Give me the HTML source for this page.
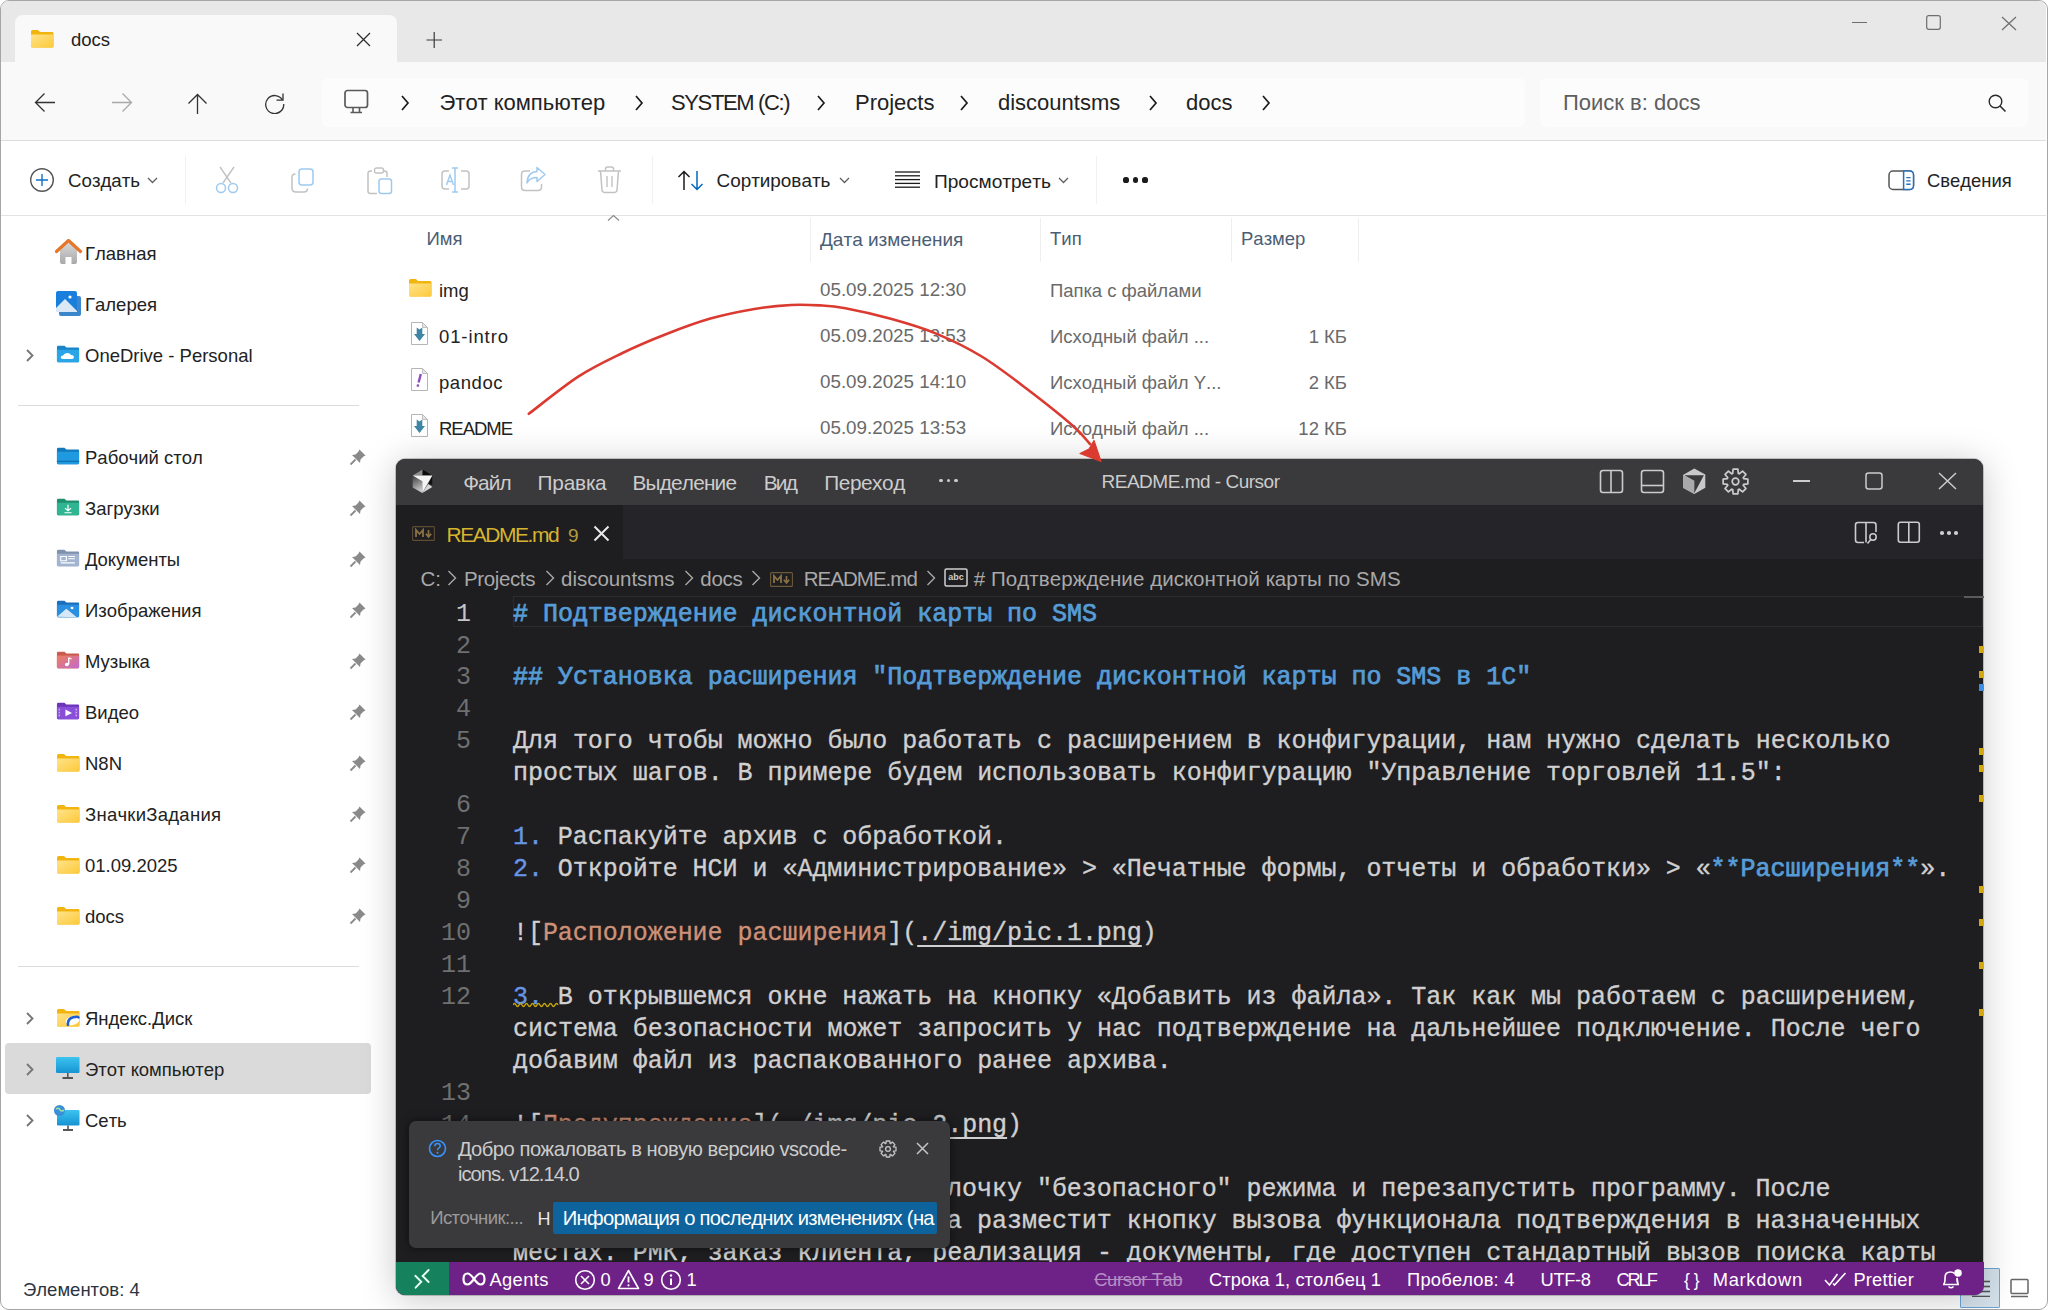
<!DOCTYPE html>
<html><head><meta charset="utf-8"><title>docs</title>
<style>
html,body{margin:0;padding:0;}
body{width:2048px;height:1310px;overflow:hidden;position:relative;background:#ffffff;font-family:'Liberation Sans',sans-serif;}
.t{position:absolute;white-space:pre;line-height:1;font-kerning:none;}
.r{position:absolute;}
</style></head><body>

<div class="r" style="left:0;top:0;width:2046px;height:1308px;border:1px solid #a6a6a6;border-radius:9px;overflow:hidden;background:#ffffff">
</div>
<div class="r" style="left:1px;top:1px;width:2045px;height:61px;background:#e8e8e8;border-radius:8px 8px 0 0"></div>
<div class="r" style="left:397px;top:61.5px;width:1649px;height:1.2px;background:#d9d9d9;"></div>
<div class="r" style="left:15px;top:15px;width:382px;height:48px;background:#f9f9f9;border-radius:8px 8px 0 0"></div>
<svg class="r" style="left:30px;top:29px;" width="25" height="20" viewBox="0 0 25 20"><defs><linearGradient id="fg30_29" x1="0" y1="0" x2="1" y2="1"><stop offset="0" stop-color="#ffe38a"/><stop offset="1" stop-color="#fcc93a"/></linearGradient></defs><path d="M1 2.5 Q1 1 2.5 1 H8 L10 3 H22.5 Q23.5 3 23.5 4.5 V17 Q23.5 18.5 22 18.5 H2.5 Q1 18.5 1 17 Z" fill="#f2b50f"/><path d="M1 5.5 H23.5 V17 Q23.5 18.5 22 18.5 H2.5 Q1 18.5 1 17 Z" fill="url(#fg30_29)"/></svg>
<div class="t" style="left:71px;top:30.9px;font-family:'Liberation Sans', sans-serif;font-size:18.5px;color:#222222;font-weight:400;">docs</div>
<svg class="r" style="left:356px;top:31.5px;" width="15" height="15" viewBox="0 0 15 15"><path d="M1 1 L14 14 M14 1 L1 14" stroke="#2a2a2a" stroke-width="1.2" fill="none"/></svg>
<svg class="r" style="left:426px;top:32px;" width="17" height="16" viewBox="0 0 17 16"><path d="M8.2 0 V16 M0.5 8 H16" stroke="#3a3a3a" stroke-width="1.2" fill="none"/></svg>
<div class="r" style="left:1852px;top:21.6px;width:15px;height:1.2px;background:#6e6e6e;"></div>
<svg class="r" style="left:1926px;top:15px;" width="15" height="15" viewBox="0 0 15 15"><rect x="0.7" y="0.7" width="13.6" height="13.6" rx="2" stroke="#6e6e6e" stroke-width="1.2" fill="none"/></svg>
<svg class="r" style="left:2001px;top:16px;" width="16" height="15" viewBox="0 0 16 15"><path d="M1 1 L15 14 M15 1 L1 14" stroke="#6e6e6e" stroke-width="1.2" fill="none"/></svg>
<div class="r" style="left:1px;top:62px;width:2045px;height:78px;background:#f9f9f9;"></div>
<div class="r" style="left:1px;top:140px;width:2045px;height:1px;background:#dedede;"></div>
<svg class="r" style="left:34px;top:92px;" width="22" height="21" viewBox="0 0 22 21"><path d="M21 10.5 H2 M10.5 1.5 L1.5 10.5 L10.5 19.5" stroke="#333333" stroke-width="1.3" fill="none"/></svg>
<svg class="r" style="left:111px;top:92px;" width="22" height="21" viewBox="0 0 22 21"><path d="M1 10.5 H20 M11.5 1.5 L20.5 10.5 L11.5 19.5" stroke="#a8a8a8" stroke-width="1.3" fill="none"/></svg>
<svg class="r" style="left:187px;top:93px;" width="21" height="21" viewBox="0 0 21 21"><path d="M10.5 21 V1.5 M1.5 10.5 L10.5 1.5 L19.5 10.5" stroke="#333333" stroke-width="1.3" fill="none"/></svg>
<svg class="r" style="left:264px;top:92px;" width="22" height="22" viewBox="0 0 22 22"><path d="M18.5 8 A9 9 0 1 0 19.7 12" stroke="#333333" stroke-width="1.3" fill="none"/><path d="M19 1.5 V8.2 H12.5" stroke="#333333" stroke-width="1.3" fill="none"/></svg>
<div class="r" style="left:322px;top:78px;width:1203px;height:49px;background:#fcfcfc;border-radius:6px"></div>
<svg class="r" style="left:344px;top:89px;" width="26" height="26" viewBox="0 0 26 26"><rect x="1" y="1.5" width="22.5" height="17" rx="2.5" stroke="#5a5a5a" stroke-width="1.7" fill="none"/><path d="M9 19 V23 M15.5 19 V23 M6.5 23.5 H18" stroke="#5a5a5a" stroke-width="1.6" fill="none"/></svg>
<svg class="r" style="left:401px;top:95px;" width="9" height="16" viewBox="0 0 9 16"><path d="M1 1 L7 8.0 L1 15" stroke="#1b1b1b" stroke-width="1.7" fill="none"/></svg>
<svg class="r" style="left:635px;top:95px;" width="9" height="16" viewBox="0 0 9 16"><path d="M1 1 L7 8.0 L1 15" stroke="#1b1b1b" stroke-width="1.7" fill="none"/></svg>
<svg class="r" style="left:817px;top:95px;" width="9" height="16" viewBox="0 0 9 16"><path d="M1 1 L7 8.0 L1 15" stroke="#1b1b1b" stroke-width="1.7" fill="none"/></svg>
<svg class="r" style="left:960px;top:95px;" width="9" height="16" viewBox="0 0 9 16"><path d="M1 1 L7 8.0 L1 15" stroke="#1b1b1b" stroke-width="1.7" fill="none"/></svg>
<svg class="r" style="left:1149px;top:95px;" width="9" height="16" viewBox="0 0 9 16"><path d="M1 1 L7 8.0 L1 15" stroke="#1b1b1b" stroke-width="1.7" fill="none"/></svg>
<svg class="r" style="left:1262px;top:95px;" width="9" height="16" viewBox="0 0 9 16"><path d="M1 1 L7 8.0 L1 15" stroke="#1b1b1b" stroke-width="1.7" fill="none"/></svg>
<div class="t" style="left:439.5px;top:91.6px;font-family:'Liberation Sans', sans-serif;font-size:22px;color:#222222;font-weight:400;">Этот компьютер</div>
<div class="t" style="left:671px;top:91.6px;font-family:'Liberation Sans', sans-serif;font-size:22px;color:#222222;font-weight:400;letter-spacing:-1.372px;">SYSTEM (C:)</div>
<div class="t" style="left:855px;top:91.6px;font-family:'Liberation Sans', sans-serif;font-size:22px;color:#222222;font-weight:400;">Projects</div>
<div class="t" style="left:998px;top:91.6px;font-family:'Liberation Sans', sans-serif;font-size:22px;color:#222222;font-weight:400;">discountsms</div>
<div class="t" style="left:1186px;top:91.6px;font-family:'Liberation Sans', sans-serif;font-size:22px;color:#222222;font-weight:400;">docs</div>
<div class="r" style="left:1540px;top:78px;width:488px;height:49px;background:#fcfcfc;border-radius:6px"></div>
<div class="t" style="left:1563px;top:91.6px;font-family:'Liberation Sans', sans-serif;font-size:22px;color:#5e5e5e;font-weight:400;">Поиск в: docs</div>
<svg class="r" style="left:1988px;top:94px;" width="19" height="19" viewBox="0 0 19 19"><circle cx="7.5" cy="7.5" r="6.3" stroke="#2a2a2a" stroke-width="1.4" fill="none"/><path d="M12 12 L17.5 17.5" stroke="#2a2a2a" stroke-width="1.6"/></svg>
<div class="r" style="left:1px;top:141px;width:2045px;height:74px;background:#ffffff;"></div>
<div class="r" style="left:1px;top:215px;width:2045px;height:1.2px;background:#e3e3e3;"></div>
<svg class="r" style="left:29px;top:167px;" width="26" height="26" viewBox="0 0 26 26"><circle cx="13" cy="13" r="11.3" stroke="#555555" stroke-width="1.4" fill="none"/><path d="M13 7 V19 M7 13 H19" stroke="#1170c8" stroke-width="1.4"/></svg>
<div class="t" style="left:68px;top:172.1px;font-family:'Liberation Sans', sans-serif;font-size:18.7px;color:#222222;font-weight:400;">Создать</div>
<svg class="r" style="left:147px;top:177px;" width="11" height="7" viewBox="0 0 11 7"><path d="M1 1 L5.5 5.5 L10 1" stroke="#5e5e5e" stroke-width="1.3" fill="none"/></svg>
<div class="r" style="left:185px;top:156px;width:1px;height:48px;background:#f1f1f1;"></div>
<svg class="r" style="left:214px;top:166px;" width="26" height="28" viewBox="0 0 26 28"><path d="M6 1 L17 17 M20 1 L9 17" stroke="#c2c2c2" stroke-width="1.4" fill="none"/><circle cx="7" cy="22" r="4.5" stroke="#9fcaef" stroke-width="1.5" fill="none"/><circle cx="19" cy="22" r="4.5" stroke="#9fcaef" stroke-width="1.5" fill="none"/></svg>
<svg class="r" style="left:291px;top:168px;" width="25" height="25" viewBox="0 0 25 25"><rect x="8" y="1" width="14" height="16" rx="3" stroke="#9fcaef" stroke-width="1.5" fill="none"/><path d="M4.5 6 Q1 6 1 9.5 V20 Q1 24 5 24 H13 Q16.5 24 16.5 20.5" stroke="#c2c2c2" stroke-width="1.5" fill="none"/></svg>
<svg class="r" style="left:367px;top:167px;" width="26" height="28" viewBox="0 0 26 28"><path d="M5 4 H3.5 Q1 4 1 6.5 V24 Q1 26.5 3.5 26.5 H10" stroke="#c2c2c2" stroke-width="1.5" fill="none"/><rect x="7.5" y="1" width="9" height="5" rx="2" stroke="#c2c2c2" stroke-width="1.4" fill="none"/><path d="M16 4 H17.5 Q20 4 20 6.5 V10" stroke="#c2c2c2" stroke-width="1.5" fill="none"/><rect x="12" y="12" width="12.5" height="14.5" rx="2.5" stroke="#9fcaef" stroke-width="1.5" fill="none"/></svg>
<svg class="r" style="left:441px;top:167px;" width="30" height="27" viewBox="0 0 30 27"><path d="M8 4 H4 Q1 4 1 7 V19 Q1 22 4 22 H8 M20 4 H25 Q28 4 28 7 V19 Q28 22 25 22 H20" stroke="#c2c2c2" stroke-width="1.5" fill="none"/><path d="M14 1 V25 M11 1 H17 M11 25 H17" stroke="#9fcaef" stroke-width="1.5" fill="none"/><path d="M5.5 18 L9 8 L12.5 18 M6.7 14.5 H11.3" stroke="#9fcaef" stroke-width="1.4" fill="none"/></svg>
<svg class="r" style="left:520px;top:166px;" width="27" height="26" viewBox="0 0 27 26"><path d="M10 5 H5 Q1.5 5 1.5 8.5 V21 Q1.5 24.5 5 24.5 H18 Q21.5 24.5 21.5 21 V18" stroke="#c2c2c2" stroke-width="1.5" fill="none"/><path d="M17 1.5 L25 8.5 L17 15.5 V11.5 Q10 11.5 7 17 Q7.5 6 17 5.5 Z" stroke="#9fcaef" stroke-width="1.5" fill="none" stroke-linejoin="round"/></svg>
<svg class="r" style="left:597px;top:166px;" width="25" height="28" viewBox="0 0 25 28"><path d="M1 5 H24 M8.5 5 V3 Q8.5 1 10.5 1 H14.5 Q16.5 1 16.5 3 V5" stroke="#c2c2c2" stroke-width="1.5" fill="none"/><path d="M3.5 5 L5 24 Q5.3 26.5 8 26.5 H17 Q19.7 26.5 20 24 L21.5 5" stroke="#c2c2c2" stroke-width="1.5" fill="none"/><path d="M10 10 V21 M15 10 V21" stroke="#c2c2c2" stroke-width="1.4"/></svg>
<div class="r" style="left:652px;top:156px;width:1px;height:48px;background:#f1f1f1;"></div>
<svg class="r" style="left:677px;top:170px;" width="28" height="21" viewBox="0 0 28 21"><path d="M7 20 V1.5 M1.5 7 L7 1.5 L12.5 7" stroke="#1b1b1b" stroke-width="1.5" fill="none"/><path d="M20 1 V19.5 M14.5 14 L20 19.5 L25.5 14" stroke="#0067c0" stroke-width="1.5" fill="none"/></svg>
<div class="t" style="left:716.5px;top:171.9px;font-family:'Liberation Sans', sans-serif;font-size:18.9px;color:#222222;font-weight:400;">Сортировать</div>
<svg class="r" style="left:839px;top:177px;" width="11" height="7" viewBox="0 0 11 7"><path d="M1 1 L5.5 5.5 L10 1" stroke="#5e5e5e" stroke-width="1.3" fill="none"/></svg>
<svg class="r" style="left:894px;top:171px;" width="27" height="18" viewBox="0 0 27 18"><path d="M1 1.0 H26" stroke="#1b1b1b" stroke-width="1.3"/><path d="M1 4.8 H26" stroke="#1b1b1b" stroke-width="1.3"/><path d="M1 8.6 H26" stroke="#1b1b1b" stroke-width="1.3"/><path d="M1 12.4 H26" stroke="#1b1b1b" stroke-width="1.3"/><path d="M1 16.2 H26" stroke="#1b1b1b" stroke-width="1.3"/></svg>
<div class="t" style="left:934px;top:171.8px;font-family:'Liberation Sans', sans-serif;font-size:19.1px;color:#222222;font-weight:400;">Просмотреть</div>
<svg class="r" style="left:1058px;top:177px;" width="11" height="7" viewBox="0 0 11 7"><path d="M1 1 L5.5 5.5 L10 1" stroke="#5e5e5e" stroke-width="1.3" fill="none"/></svg>
<div class="r" style="left:1096px;top:156px;width:1px;height:48px;background:#f1f1f1;"></div>
<div class="r" style="left:1123.4px;top:177.4px;width:5.2px;height:5.2px;border-radius:50%;background:#1b1b1b"></div>
<div class="r" style="left:1132.9px;top:177.4px;width:5.2px;height:5.2px;border-radius:50%;background:#1b1b1b"></div>
<div class="r" style="left:1142.4px;top:177.4px;width:5.2px;height:5.2px;border-radius:50%;background:#1b1b1b"></div>
<svg class="r" style="left:1888px;top:170px;" width="27" height="21" viewBox="0 0 27 21"><rect x="1" y="1" width="24.5" height="18.5" rx="4" stroke="#555555" stroke-width="1.5" fill="none"/><path d="M15.6 1 H21.5 Q25.5 1 25.5 5 V15.5 Q25.5 19.5 21.5 19.5 H15.6 Z" fill="#ffffff" stroke="#2a6fb8" stroke-width="1.5"/><path d="M18.3 7.6 H22.6 M18.3 10.9 H22.6 M18.3 14.2 H22.6" stroke="#2a6fb8" stroke-width="1.4"/></svg>
<div class="t" style="left:1927px;top:172.4px;font-family:'Liberation Sans', sans-serif;font-size:18.4px;color:#222222;font-weight:400;">Сведения</div>
<div class="t" style="left:85px;top:244.6px;font-family:'Liberation Sans', sans-serif;font-size:18.5px;color:#222222;font-weight:400;">Главная</div>
<svg class="r" style="left:55px;top:239px;" width="28" height="26" viewBox="0 0 28 26"><defs><linearGradient id="hg" x1="0" y1="0" x2="0" y2="1"><stop offset="0" stop-color="#d8d8d8"/><stop offset="1" stop-color="#a9a9a9"/></linearGradient></defs><path d="M5 11 L13.5 3 L22 11 V23 Q22 25 20 25 H16.5 V18 H10.5 V25 H7 Q5 25 5 23 Z" fill="url(#hg)"/><path d="M1.5 12.5 L13.5 1.5 L25.5 12.5" stroke="#e5762a" stroke-width="3.2" fill="none" stroke-linejoin="round" stroke-linecap="round"/></svg>
<div class="t" style="left:85px;top:295.6px;font-family:'Liberation Sans', sans-serif;font-size:18.5px;color:#222222;font-weight:400;">Галерея</div>
<svg class="r" style="left:55px;top:290px;" width="28" height="27" viewBox="0 0 28 27"><rect x="4" y="6" width="22" height="20" rx="2" fill="#3c86cc"/><rect x="1" y="1" width="21" height="21" rx="2" fill="#1a7fdc"/><path d="M1 18 L10 9 L22 21 V22 H1 Z" fill="#dbe9f6"/><circle cx="15" cy="7" r="1.6" fill="#ffffff"/></svg>
<div class="t" style="left:85px;top:346.6px;font-family:'Liberation Sans', sans-serif;font-size:18.5px;color:#222222;font-weight:400;">OneDrive - Personal</div>
<svg class="r" style="left:56px;top:344.5px" width="24.5" height="18.5" viewBox="0 0 26 22" preserveAspectRatio="none"><path d="M1 2.5 Q1 1 2.5 1 H9 L11 3 H23.5 Q24.5 3 24.5 4 V19 Q24.5 20.5 23 20.5 H2.5 Q1 20.5 1 19 Z" fill="#1b84c8"/><path d="M1 5.5 H24.5 V19 Q24.5 20.5 23 20.5 H2.5 Q1 20.5 1 19 Z" fill="#2aa5e8"/><path d="M7 16.5 Q5 16.5 5 14.5 Q5 12.5 7.5 12.5 Q8.5 9.5 12 9.5 Q15 9.5 16 12 Q19 12 19 14.5 Q19 16.5 17 16.5 Z" fill="#ffffff"/></svg>
<svg class="r" style="left:26px;top:348.5px;" width="8.5" height="13" viewBox="0 0 8.5 13"><path d="M1 1 L6.5 6.5 L1 12" stroke="#777777" stroke-width="1.9" fill="none"/></svg>
<div class="r" style="left:18px;top:405px;width:341px;height:1.2px;background:#dcdcdc;"></div>
<div class="t" style="left:85px;top:448.6px;font-family:'Liberation Sans', sans-serif;font-size:18.5px;color:#222222;font-weight:400;">Рабочий стол</div>
<svg class="r" style="left:56px;top:446.5px" width="24.5" height="18.5" viewBox="0 0 26 22" preserveAspectRatio="none"><path d="M1 2.5 Q1 1 2.5 1 H9 L11 3 H23.5 Q24.5 3 24.5 4 V19 Q24.5 20.5 23 20.5 H2.5 Q1 20.5 1 19 Z" fill="#1379bd"/><path d="M1 5.5 H24.5 V19 Q24.5 20.5 23 20.5 H2.5 Q1 20.5 1 19 Z" fill="#1f9ae0"/><path d="M1 17 H24.5" stroke="#0f5f9a" stroke-width="1"/></svg>
<svg class="r" style="left:349px;top:448px;" width="18" height="18" viewBox="0 0 18 18"><path d="M10.5 1.5 L16.5 7.5 L14.5 8.5 L11.5 11.5 L11 15 L3 7 L6.5 6.5 L9.5 3.5 Z" fill="#8a8a8a"/><path d="M6.5 11.5 L1.5 16.5" stroke="#8a8a8a" stroke-width="1.8"/></svg>
<div class="t" style="left:85px;top:499.6px;font-family:'Liberation Sans', sans-serif;font-size:18.5px;color:#222222;font-weight:400;">Загрузки</div>
<svg class="r" style="left:56px;top:497.5px" width="24.5" height="18.5" viewBox="0 0 26 22" preserveAspectRatio="none"><path d="M1 2.5 Q1 1 2.5 1 H9 L11 3 H23.5 Q24.5 3 24.5 4 V19 Q24.5 20.5 23 20.5 H2.5 Q1 20.5 1 19 Z" fill="#1e8f6e"/><path d="M1 5.5 H24.5 V19 Q24.5 20.5 23 20.5 H2.5 Q1 20.5 1 19 Z" fill="#2fb591"/><path d="M12.7 8 V15 M9.5 12 L12.7 15.2 L16 12 M9 17.5 H16.5" stroke="#ffffff" stroke-width="1.3" fill="none"/></svg>
<svg class="r" style="left:349px;top:499px;" width="18" height="18" viewBox="0 0 18 18"><path d="M10.5 1.5 L16.5 7.5 L14.5 8.5 L11.5 11.5 L11 15 L3 7 L6.5 6.5 L9.5 3.5 Z" fill="#8a8a8a"/><path d="M6.5 11.5 L1.5 16.5" stroke="#8a8a8a" stroke-width="1.8"/></svg>
<div class="t" style="left:85px;top:550.6px;font-family:'Liberation Sans', sans-serif;font-size:18.5px;color:#222222;font-weight:400;">Документы</div>
<svg class="r" style="left:56px;top:548.5px" width="24.5" height="18.5" viewBox="0 0 26 22" preserveAspectRatio="none"><path d="M1 2.5 Q1 1 2.5 1 H9 L11 3 H23.5 Q24.5 3 24.5 4 V19 Q24.5 20.5 23 20.5 H2.5 Q1 20.5 1 19 Z" fill="#7f91ad"/><path d="M1 5.5 H24.5 V19 Q24.5 20.5 23 20.5 H2.5 Q1 20.5 1 19 Z" fill="#a2b4cf"/><path d="M5 9 H11 V14 H5 Z M13 9 H20 M13 11.5 H20 M5 16.5 H20" stroke="#ffffff" stroke-width="1.2" fill="none"/></svg>
<svg class="r" style="left:349px;top:550px;" width="18" height="18" viewBox="0 0 18 18"><path d="M10.5 1.5 L16.5 7.5 L14.5 8.5 L11.5 11.5 L11 15 L3 7 L6.5 6.5 L9.5 3.5 Z" fill="#8a8a8a"/><path d="M6.5 11.5 L1.5 16.5" stroke="#8a8a8a" stroke-width="1.8"/></svg>
<div class="t" style="left:85px;top:601.6px;font-family:'Liberation Sans', sans-serif;font-size:18.5px;color:#222222;font-weight:400;">Изображения</div>
<svg class="r" style="left:56px;top:599.5px" width="24.5" height="18.5" viewBox="0 0 26 22" preserveAspectRatio="none"><path d="M1 2.5 Q1 1 2.5 1 H9 L11 3 H23.5 Q24.5 3 24.5 4 V19 Q24.5 20.5 23 20.5 H2.5 Q1 20.5 1 19 Z" fill="#1a6fbd"/><path d="M1 5.5 H24.5 V19 Q24.5 20.5 23 20.5 H2.5 Q1 20.5 1 19 Z" fill="#2a8fe0"/><path d="M3 19 L11 11 L20 20" fill="#d6e7f7"/><path d="M1 20 L11 10.5 L22 20.5 Z" fill="#d6e7f7"/><circle cx="17" cy="9.5" r="1.6" fill="#fff"/></svg>
<svg class="r" style="left:349px;top:601px;" width="18" height="18" viewBox="0 0 18 18"><path d="M10.5 1.5 L16.5 7.5 L14.5 8.5 L11.5 11.5 L11 15 L3 7 L6.5 6.5 L9.5 3.5 Z" fill="#8a8a8a"/><path d="M6.5 11.5 L1.5 16.5" stroke="#8a8a8a" stroke-width="1.8"/></svg>
<div class="t" style="left:85px;top:652.6px;font-family:'Liberation Sans', sans-serif;font-size:18.5px;color:#222222;font-weight:400;">Музыка</div>
<svg class="r" style="left:56px;top:650.5px" width="24.5" height="18.5" viewBox="0 0 26 22" preserveAspectRatio="none"><path d="M1 2.5 Q1 1 2.5 1 H9 L11 3 H23.5 Q24.5 3 24.5 4 V19 Q24.5 20.5 23 20.5 H2.5 Q1 20.5 1 19 Z" fill="#c85b4d"/><path d="M1 5.5 H24.5 V19 Q24.5 20.5 23 20.5 H2.5 Q1 20.5 1 19 Z" fill="#e77b6b"/><defs><linearGradient id="mg" x1="0" y1="0" x2="1" y2="1"><stop offset="0" stop-color="#ef7d5d"/><stop offset="1" stop-color="#c06ad0"/></linearGradient></defs><path d="M1 5.5 H24.5 V19 Q24.5 20.5 23 20.5 H2.5 Q1 20.5 1 19 Z" fill="url(#mg)"/><path d="M13.5 8 V16" stroke="#fff" stroke-width="1.4"/><circle cx="11.5" cy="16" r="2" fill="#fff"/><path d="M13.5 8 L16.5 9.5" stroke="#fff" stroke-width="1.4"/></svg>
<svg class="r" style="left:349px;top:652px;" width="18" height="18" viewBox="0 0 18 18"><path d="M10.5 1.5 L16.5 7.5 L14.5 8.5 L11.5 11.5 L11 15 L3 7 L6.5 6.5 L9.5 3.5 Z" fill="#8a8a8a"/><path d="M6.5 11.5 L1.5 16.5" stroke="#8a8a8a" stroke-width="1.8"/></svg>
<div class="t" style="left:85px;top:703.6px;font-family:'Liberation Sans', sans-serif;font-size:18.5px;color:#222222;font-weight:400;">Видео</div>
<svg class="r" style="left:56px;top:701.5px" width="24.5" height="18.5" viewBox="0 0 26 22" preserveAspectRatio="none"><path d="M1 2.5 Q1 1 2.5 1 H9 L11 3 H23.5 Q24.5 3 24.5 4 V19 Q24.5 20.5 23 20.5 H2.5 Q1 20.5 1 19 Z" fill="#6d35b8"/><path d="M1 5.5 H24.5 V19 Q24.5 20.5 23 20.5 H2.5 Q1 20.5 1 19 Z" fill="#8a4fd8"/><path d="M10 9 L17 13 L10 17 Z" fill="#fff"/><path d="M3.5 8 V18 M21.5 8 V18" stroke="#c9a9f2" stroke-width="1.6" stroke-dasharray="2 1.5"/></svg>
<svg class="r" style="left:349px;top:703px;" width="18" height="18" viewBox="0 0 18 18"><path d="M10.5 1.5 L16.5 7.5 L14.5 8.5 L11.5 11.5 L11 15 L3 7 L6.5 6.5 L9.5 3.5 Z" fill="#8a8a8a"/><path d="M6.5 11.5 L1.5 16.5" stroke="#8a8a8a" stroke-width="1.8"/></svg>
<div class="t" style="left:85px;top:754.6px;font-family:'Liberation Sans', sans-serif;font-size:18.5px;color:#222222;font-weight:400;">N8N</div>
<svg class="r" style="left:56px;top:753px;" width="25" height="20" viewBox="0 0 25 20"><defs><linearGradient id="fg56_753" x1="0" y1="0" x2="1" y2="1"><stop offset="0" stop-color="#ffe38a"/><stop offset="1" stop-color="#fcc93a"/></linearGradient></defs><path d="M1 2.5 Q1 1 2.5 1 H8 L10 3 H22.5 Q23.5 3 23.5 4.5 V17 Q23.5 18.5 22 18.5 H2.5 Q1 18.5 1 17 Z" fill="#f2b50f"/><path d="M1 5.5 H23.5 V17 Q23.5 18.5 22 18.5 H2.5 Q1 18.5 1 17 Z" fill="url(#fg56_753)"/></svg>
<svg class="r" style="left:349px;top:754px;" width="18" height="18" viewBox="0 0 18 18"><path d="M10.5 1.5 L16.5 7.5 L14.5 8.5 L11.5 11.5 L11 15 L3 7 L6.5 6.5 L9.5 3.5 Z" fill="#8a8a8a"/><path d="M6.5 11.5 L1.5 16.5" stroke="#8a8a8a" stroke-width="1.8"/></svg>
<div class="t" style="left:85px;top:805.6px;font-family:'Liberation Sans', sans-serif;font-size:18.5px;color:#222222;font-weight:400;letter-spacing:0.262px;">ЗначкиЗадания</div>
<svg class="r" style="left:56px;top:804px;" width="25" height="20" viewBox="0 0 25 20"><defs><linearGradient id="fg56_804" x1="0" y1="0" x2="1" y2="1"><stop offset="0" stop-color="#ffe38a"/><stop offset="1" stop-color="#fcc93a"/></linearGradient></defs><path d="M1 2.5 Q1 1 2.5 1 H8 L10 3 H22.5 Q23.5 3 23.5 4.5 V17 Q23.5 18.5 22 18.5 H2.5 Q1 18.5 1 17 Z" fill="#f2b50f"/><path d="M1 5.5 H23.5 V17 Q23.5 18.5 22 18.5 H2.5 Q1 18.5 1 17 Z" fill="url(#fg56_804)"/></svg>
<svg class="r" style="left:349px;top:805px;" width="18" height="18" viewBox="0 0 18 18"><path d="M10.5 1.5 L16.5 7.5 L14.5 8.5 L11.5 11.5 L11 15 L3 7 L6.5 6.5 L9.5 3.5 Z" fill="#8a8a8a"/><path d="M6.5 11.5 L1.5 16.5" stroke="#8a8a8a" stroke-width="1.8"/></svg>
<div class="t" style="left:85px;top:856.6px;font-family:'Liberation Sans', sans-serif;font-size:18.5px;color:#222222;font-weight:400;">01.09.2025</div>
<svg class="r" style="left:56px;top:855px;" width="25" height="20" viewBox="0 0 25 20"><defs><linearGradient id="fg56_855" x1="0" y1="0" x2="1" y2="1"><stop offset="0" stop-color="#ffe38a"/><stop offset="1" stop-color="#fcc93a"/></linearGradient></defs><path d="M1 2.5 Q1 1 2.5 1 H8 L10 3 H22.5 Q23.5 3 23.5 4.5 V17 Q23.5 18.5 22 18.5 H2.5 Q1 18.5 1 17 Z" fill="#f2b50f"/><path d="M1 5.5 H23.5 V17 Q23.5 18.5 22 18.5 H2.5 Q1 18.5 1 17 Z" fill="url(#fg56_855)"/></svg>
<svg class="r" style="left:349px;top:856px;" width="18" height="18" viewBox="0 0 18 18"><path d="M10.5 1.5 L16.5 7.5 L14.5 8.5 L11.5 11.5 L11 15 L3 7 L6.5 6.5 L9.5 3.5 Z" fill="#8a8a8a"/><path d="M6.5 11.5 L1.5 16.5" stroke="#8a8a8a" stroke-width="1.8"/></svg>
<div class="t" style="left:85px;top:907.6px;font-family:'Liberation Sans', sans-serif;font-size:18.5px;color:#222222;font-weight:400;">docs</div>
<svg class="r" style="left:56px;top:906px;" width="25" height="20" viewBox="0 0 25 20"><defs><linearGradient id="fg56_906" x1="0" y1="0" x2="1" y2="1"><stop offset="0" stop-color="#ffe38a"/><stop offset="1" stop-color="#fcc93a"/></linearGradient></defs><path d="M1 2.5 Q1 1 2.5 1 H8 L10 3 H22.5 Q23.5 3 23.5 4.5 V17 Q23.5 18.5 22 18.5 H2.5 Q1 18.5 1 17 Z" fill="#f2b50f"/><path d="M1 5.5 H23.5 V17 Q23.5 18.5 22 18.5 H2.5 Q1 18.5 1 17 Z" fill="url(#fg56_906)"/></svg>
<svg class="r" style="left:349px;top:907px;" width="18" height="18" viewBox="0 0 18 18"><path d="M10.5 1.5 L16.5 7.5 L14.5 8.5 L11.5 11.5 L11 15 L3 7 L6.5 6.5 L9.5 3.5 Z" fill="#8a8a8a"/><path d="M6.5 11.5 L1.5 16.5" stroke="#8a8a8a" stroke-width="1.8"/></svg>
<div class="r" style="left:18px;top:966px;width:341px;height:1.2px;background:#dcdcdc;"></div>
<div class="t" style="left:85px;top:1009.6px;font-family:'Liberation Sans', sans-serif;font-size:18.5px;color:#222222;font-weight:400;">Яндекс.Диск</div>
<svg class="r" style="left:56px;top:1008px;" width="25" height="20" viewBox="0 0 25 20"><defs><linearGradient id="fg56_1008" x1="0" y1="0" x2="1" y2="1"><stop offset="0" stop-color="#ffe38a"/><stop offset="1" stop-color="#fcc93a"/></linearGradient></defs><path d="M1 2.5 Q1 1 2.5 1 H8 L10 3 H22.5 Q23.5 3 23.5 4.5 V17 Q23.5 18.5 22 18.5 H2.5 Q1 18.5 1 17 Z" fill="#f2b50f"/><path d="M1 5.5 H23.5 V17 Q23.5 18.5 22 18.5 H2.5 Q1 18.5 1 17 Z" fill="url(#fg56_1008)"/></svg>
<svg class="r" style="left:64px;top:1015px;transform:rotate(-15deg)" width="17" height="11" viewBox="0 0 17 11"><ellipse cx="8.5" cy="5.5" rx="7" ry="4.5" fill="#ffffff"/><path d="M3 8.5 Q4 2.5 10 2.5 Q14.5 2.5 15 4" stroke="#1f5fd0" stroke-width="2.6" fill="none" stroke-linecap="round"/></svg>
<svg class="r" style="left:26px;top:1011.5px;" width="8.5" height="13" viewBox="0 0 8.5 13"><path d="M1 1 L6.5 6.5 L1 12" stroke="#777777" stroke-width="1.9" fill="none"/></svg>
<div class="r" style="left:5px;top:1043px;width:366px;height:51px;background:#dadada;border-radius:4px"></div>
<div class="t" style="left:85px;top:1060.6px;font-family:'Liberation Sans', sans-serif;font-size:18.5px;color:#222222;font-weight:400;">Этот компьютер</div>
<svg class="r" style="left:55px;top:1056px;" width="26" height="25" viewBox="0 0 26 25"><defs><linearGradient id="pcg" x1="0" y1="0" x2="0" y2="1"><stop offset="0" stop-color="#3cc4f0"/><stop offset="1" stop-color="#1693d2"/></linearGradient></defs><rect x="1" y="1" width="23.5" height="16" rx="1.2" fill="url(#pcg)"/><path d="M12.8 17 V21" stroke="#555" stroke-width="1.6"/><path d="M7.5 22 H18" stroke="#444" stroke-width="1.8"/></svg>
<svg class="r" style="left:26px;top:1062.5px;" width="8.5" height="13" viewBox="0 0 8.5 13"><path d="M1 1 L6.5 6.5 L1 12" stroke="#777777" stroke-width="1.9" fill="none"/></svg>
<div class="t" style="left:85px;top:1111.6px;font-family:'Liberation Sans', sans-serif;font-size:18.5px;color:#222222;font-weight:400;">Сеть</div>
<svg class="r" style="left:53px;top:1104px;" width="29" height="28" viewBox="0 0 29 28"><defs><linearGradient id="ng" x1="0" y1="0" x2="0" y2="1"><stop offset="0" stop-color="#3cc4f0"/><stop offset="1" stop-color="#1693d2"/></linearGradient></defs><rect x="4" y="6" width="22.5" height="15.5" rx="1.2" fill="url(#ng)"/><path d="M15 21.5 V25" stroke="#555" stroke-width="1.6"/><path d="M10 26 H20" stroke="#444" stroke-width="1.8"/><circle cx="6.5" cy="6.5" r="5.5" fill="#3a8fd9"/><path d="M3 5 Q6 3 7 6 Q9 8 11 6" stroke="#9fe0a0" stroke-width="1.6" fill="none"/></svg>
<svg class="r" style="left:26px;top:1113.5px;" width="8.5" height="13" viewBox="0 0 8.5 13"><path d="M1 1 L6.5 6.5 L1 12" stroke="#777777" stroke-width="1.9" fill="none"/></svg>
<div class="t" style="left:23px;top:1280.8px;font-family:'Liberation Sans', sans-serif;font-size:18.5px;color:#2b3442;font-weight:400;">Элементов: 4</div>
<div class="t" style="left:426.5px;top:230.3px;font-family:'Liberation Sans', sans-serif;font-size:18.5px;color:#4a5e76;font-weight:400;">Имя</div>
<div class="t" style="left:820px;top:229.8px;font-family:'Liberation Sans', sans-serif;font-size:19px;color:#4a5e76;font-weight:400;">Дата изменения</div>
<div class="t" style="left:1050px;top:230.3px;font-family:'Liberation Sans', sans-serif;font-size:18.5px;color:#4a5e76;font-weight:400;">Тип</div>
<div class="t" style="left:1241px;top:230.3px;font-family:'Liberation Sans', sans-serif;font-size:18.5px;color:#4a5e76;font-weight:400;">Размер</div>
<div class="r" style="left:810px;top:218px;width:1px;height:44px;background:#efefef;"></div>
<div class="r" style="left:1040px;top:218px;width:1px;height:44px;background:#efefef;"></div>
<div class="r" style="left:1231px;top:218px;width:1px;height:44px;background:#efefef;"></div>
<div class="r" style="left:1358px;top:218px;width:1px;height:44px;background:#efefef;"></div>
<svg class="r" style="left:607px;top:214px;" width="13" height="8" viewBox="0 0 13 8"><path d="M1 6.5 L6.5 1.5 L12 6.5" stroke="#8a8a8a" stroke-width="1.2" fill="none"/></svg>
<div class="t" style="left:439px;top:281.6px;font-family:'Liberation Sans', sans-serif;font-size:18.5px;color:#222222;font-weight:400;">img</div>
<div class="t" style="left:820px;top:281.3px;font-family:'Liberation Sans', sans-serif;font-size:18.8px;color:#6a6a6a;font-weight:400;">05.09.2025 12:30</div>
<div class="t" style="left:1050px;top:281.6px;font-family:'Liberation Sans', sans-serif;font-size:18.5px;color:#6a6a6a;font-weight:400;">Папка с файлами</div>
<svg class="r" style="left:408px;top:278px;" width="25" height="20" viewBox="0 0 25 20"><defs><linearGradient id="fg408_278" x1="0" y1="0" x2="1" y2="1"><stop offset="0" stop-color="#ffe38a"/><stop offset="1" stop-color="#fcc93a"/></linearGradient></defs><path d="M1 2.5 Q1 1 2.5 1 H8 L10 3 H22.5 Q23.5 3 23.5 4.5 V17 Q23.5 18.5 22 18.5 H2.5 Q1 18.5 1 17 Z" fill="#f2b50f"/><path d="M1 5.5 H23.5 V17 Q23.5 18.5 22 18.5 H2.5 Q1 18.5 1 17 Z" fill="url(#fg408_278)"/></svg>
<div class="t" style="left:439px;top:327.6px;font-family:'Liberation Sans', sans-serif;font-size:18.5px;color:#222222;font-weight:400;letter-spacing:0.896px;">01-intro</div>
<div class="t" style="left:820px;top:327.3px;font-family:'Liberation Sans', sans-serif;font-size:18.8px;color:#6a6a6a;font-weight:400;">05.09.2025 13:53</div>
<div class="t" style="left:1050px;top:327.6px;font-family:'Liberation Sans', sans-serif;font-size:18.5px;color:#6a6a6a;font-weight:400;">Исходный файл ...</div>
<div class="t" style="right:701px;top:327.6px;font-family:'Liberation Sans', sans-serif;font-size:18.5px;color:#6a6a6a">1 КБ</div>
<svg class="r" style="left:410px;top:321px;" width="19" height="25" viewBox="0 0 19 25"><path d="M1.5 1.5 H12.5 L17.5 6.5 V23.5 H1.5 Z" fill="#ffffff" stroke="#b5b5b5" stroke-width="1"/><path d="M12.5 1.5 V6.5 H17.5 Z" fill="#e4e4e4" stroke="#b5b5b5" stroke-width="0.8"/><path d="M6.7 6.5 L9.5 8.5 L12.3 6.5 V13 H15 L9.5 20 L4 13 H6.7 Z" fill="#3f86a6"/></svg>
<div class="t" style="left:439px;top:373.6px;font-family:'Liberation Sans', sans-serif;font-size:18.5px;color:#222222;font-weight:400;letter-spacing:0.561px;">pandoc</div>
<div class="t" style="left:820px;top:373.3px;font-family:'Liberation Sans', sans-serif;font-size:18.8px;color:#6a6a6a;font-weight:400;">05.09.2025 14:10</div>
<div class="t" style="left:1050px;top:373.6px;font-family:'Liberation Sans', sans-serif;font-size:18.5px;color:#6a6a6a;font-weight:400;">Исходный файл Y...</div>
<div class="t" style="right:701px;top:373.6px;font-family:'Liberation Sans', sans-serif;font-size:18.5px;color:#6a6a6a">2 КБ</div>
<svg class="r" style="left:410px;top:367px;" width="19" height="25" viewBox="0 0 19 25"><path d="M1.5 1.5 H12.5 L17.5 6.5 V23.5 H1.5 Z" fill="#ffffff" stroke="#b5b5b5" stroke-width="1"/><path d="M12.5 1.5 V6.5 H17.5 Z" fill="#e4e4e4" stroke="#b5b5b5" stroke-width="0.8"/><path d="M10.8 7 L8.6 15.5" stroke="#8a4ec0" stroke-width="2.4"/><circle cx="7.9" cy="18.6" r="1.3" fill="#8a4ec0"/></svg>
<div class="t" style="left:439px;top:419.6px;font-family:'Liberation Sans', sans-serif;font-size:18.5px;color:#222222;font-weight:400;letter-spacing:-1.030px;">README</div>
<div class="t" style="left:820px;top:419.3px;font-family:'Liberation Sans', sans-serif;font-size:18.8px;color:#6a6a6a;font-weight:400;">05.09.2025 13:53</div>
<div class="t" style="left:1050px;top:419.6px;font-family:'Liberation Sans', sans-serif;font-size:18.5px;color:#6a6a6a;font-weight:400;">Исходный файл ...</div>
<div class="t" style="right:701px;top:419.6px;font-family:'Liberation Sans', sans-serif;font-size:18.5px;color:#6a6a6a">12 КБ</div>
<svg class="r" style="left:410px;top:413px;" width="19" height="25" viewBox="0 0 19 25"><path d="M1.5 1.5 H12.5 L17.5 6.5 V23.5 H1.5 Z" fill="#ffffff" stroke="#b5b5b5" stroke-width="1"/><path d="M12.5 1.5 V6.5 H17.5 Z" fill="#e4e4e4" stroke="#b5b5b5" stroke-width="0.8"/><path d="M6.7 6.5 L9.5 8.5 L12.3 6.5 V13 H15 L9.5 20 L4 13 H6.7 Z" fill="#3f86a6"/></svg>
<div class="r" style="left:1960px;top:1268px;width:40px;height:40px;background:#d5e2ec;border:1px solid #6aa6d8;box-sizing:border-box;border-radius:1px"></div>
<svg class="r" style="left:1971px;top:1280px;" width="20" height="17" viewBox="0 0 20 17"><path d="M8 1.5 H19" stroke="#555" stroke-width="1.6"/><path d="M8 6.5 H19" stroke="#555" stroke-width="1.6"/><path d="M8 11.5 H19" stroke="#555" stroke-width="1.6"/><path d="M1 16.5 H19" stroke="#555" stroke-width="1.6"/></svg>
<svg class="r" style="left:2010px;top:1278px;" width="20" height="20" viewBox="0 0 20 20"><rect x="1" y="1.5" width="17" height="14" rx="1" stroke="#666" stroke-width="1.5" fill="none"/><path d="M1 18.5 H18" stroke="#666" stroke-width="1.5"/></svg>
<div class="r" style="left:396px;top:458.6px;width:1587.3px;height:836.1999999999999px;border-radius:9px;background:#1e1d20;box-shadow:0 4px 36px rgba(0,0,0,0.22),0 0 0 1px rgba(0,0,0,0.2);overflow:hidden">
<div class="r" style="left:0px;top:0px;width:1587.3px;height:46.7px;background:#3a393c;"></div>
<div class="r" style="left:0px;top:46.7px;width:1587.3px;height:54px;background:#252428;"></div>
<div class="r" style="left:0px;top:46.7px;width:227px;height:54px;background:#1e1d20;"></div>
</div>
<svg class="r" style="left:408px;top:466px;" width="30" height="30" viewBox="0 0 30 30"><defs><linearGradient id="clf" x1="0" y1="0" x2="0.3" y2="1"><stop offset="0" stop-color="#3a3a3a"/><stop offset="1" stop-color="#c8c8c8"/></linearGradient></defs><path d="M14.7 3.6 L24.3 9.5 V21.1 L14.3 27 L4.7 21.5 V9.5 Z" fill="#4a4a4a"/><path d="M4.7 9.5 L14.3 15.3 V27 L4.7 21.5 Z" fill="url(#clf)"/><path d="M14.7 3.6 L4.7 9.5 L14.5 9.5 Z" fill="#8c8c8c"/><path d="M14.7 3.6 L24.3 9.5 L14.5 9.5 Z" fill="#0c0c0c"/><path d="M24.3 9.5 V19 L20.2 18 Z" fill="#111111"/><path d="M20.2 18 L24.3 21.1 L14.3 27 Z" fill="#d8d8d8"/><path d="M4.7 9.5 L24.3 9.5 L14.3 27 V15.3 Z" fill="#f4f4f4"/></svg>
<div class="t" style="left:463.2px;top:472.6px;font-family:'Liberation Sans', sans-serif;font-size:20.8px;color:#cccccc;font-weight:400;letter-spacing:-0.879px;">Файл</div>
<div class="t" style="left:537.5px;top:472.6px;font-family:'Liberation Sans', sans-serif;font-size:20.8px;color:#cccccc;font-weight:400;letter-spacing:-0.161px;">Правка</div>
<div class="t" style="left:632.5px;top:472.6px;font-family:'Liberation Sans', sans-serif;font-size:20.8px;color:#cccccc;font-weight:400;letter-spacing:-0.801px;">Выделение</div>
<div class="t" style="left:763.8px;top:472.6px;font-family:'Liberation Sans', sans-serif;font-size:20.8px;color:#cccccc;font-weight:400;letter-spacing:-1.814px;">Вид</div>
<div class="t" style="left:824.3px;top:472.6px;font-family:'Liberation Sans', sans-serif;font-size:20.8px;color:#cccccc;font-weight:400;letter-spacing:-0.460px;">Переход</div>
<div class="r" style="left:939.4px;top:479.3px;width:3.2px;height:3.2px;border-radius:50%;background:#cccccc"></div>
<div class="r" style="left:946.9px;top:479.3px;width:3.2px;height:3.2px;border-radius:50%;background:#cccccc"></div>
<div class="r" style="left:954.4px;top:479.3px;width:3.2px;height:3.2px;border-radius:50%;background:#cccccc"></div>
<div class="t" style="left:1101.5px;top:472.2px;font-family:'Liberation Sans', sans-serif;font-size:19px;color:#cccccc;font-weight:400;letter-spacing:-0.491px;">README.md - Cursor</div>
<svg class="r" style="left:1599px;top:469px;" width="25" height="25" viewBox="0 0 25 25"><rect x="1.5" y="1.5" width="22" height="22" rx="2.5" stroke="#cccccc" stroke-width="1.6" fill="none"/><path d="M12 1.5 V23.5" stroke="#cccccc" stroke-width="1.6"/></svg>
<svg class="r" style="left:1640px;top:469px;" width="25" height="25" viewBox="0 0 25 25"><rect x="1.5" y="1.5" width="22" height="22" rx="2.5" stroke="#cccccc" stroke-width="1.6" fill="none"/><path d="M1.5 16.5 H23.5" stroke="#cccccc" stroke-width="1.6"/></svg>
<svg class="r" style="left:1681px;top:466px;" width="26" height="30" viewBox="0 0 26 30"><path d="M13.3 2.4 L24.3 8.5 V21.8 L13.3 28 L2 21.8 V8.9 Z" fill="#c9c9cb"/><path d="M2 8.9 L13.3 15 V28 L2 21.8 Z" fill="#a9a9ab"/><path d="M3.4 9.3 L22.9 9.3 L13.3 27.3 V14.75 Z" fill="#3a393c"/></svg>
<svg class="r" style="left:1722px;top:468px;" width="27" height="27" viewBox="0 0 27 27"><polygon points="11.12,1.13 15.88,1.13 16.29,5.36 17.28,5.78 20.57,3.07 23.93,6.43 21.22,9.72 21.64,10.71 25.87,11.12 25.87,15.88 21.64,16.29 21.22,17.28 23.93,20.57 20.57,23.93 17.28,21.22 16.29,21.64 15.88,25.87 11.12,25.87 10.71,21.64 9.72,21.22 6.43,23.93 3.07,20.57 5.78,17.28 5.36,16.29 1.13,15.88 1.13,11.12 5.36,10.71 5.78,9.72 3.07,6.43 6.43,3.07 9.72,5.78 10.71,5.36" stroke="#cccccc" stroke-width="1.7" fill="none" stroke-linejoin="round"/><circle cx="13.5" cy="13.5" r="3.3" stroke="#cccccc" stroke-width="1.7" fill="none"/></svg>
<div class="r" style="left:1793px;top:480px;width:17px;height:1.5px;background:#cccccc;"></div>
<svg class="r" style="left:1865px;top:472px;" width="18" height="18" viewBox="0 0 18 18"><rect x="1" y="1" width="16" height="16" rx="2.5" stroke="#cccccc" stroke-width="1.5" fill="none"/></svg>
<svg class="r" style="left:1938px;top:472px;" width="19" height="18" viewBox="0 0 19 18"><path d="M1 1 L18 17 M18 1 L1 17" stroke="#cccccc" stroke-width="1.5" fill="none"/></svg>
<svg class="r" style="left:412px;top:526px;" width="23" height="15" viewBox="0 0 23 15"><rect x="0.6" y="0.6" width="21.8" height="13.8" rx="1" stroke="#5e4d33" stroke-width="1.1" fill="none"/><path d="M4 11 V4 L7.5 8 L11 4 V11" stroke="#8a7246" stroke-width="1.8" fill="none"/><path d="M16.5 4 V10 M13.8 7.8 L16.5 11 L19.2 7.8" stroke="#8a7246" stroke-width="1.7" fill="none"/></svg>
<div class="t" style="left:446.6px;top:523.9px;font-family:'Liberation Sans', sans-serif;font-size:21px;color:#d6b52e;font-weight:400;letter-spacing:-1.481px;">README.md</div>
<div class="t" style="left:568px;top:525.6px;font-family:'Liberation Sans', sans-serif;font-size:19px;color:#b39c40;font-weight:400;">9</div>
<svg class="r" style="left:593px;top:525px;" width="17" height="17" viewBox="0 0 17 17"><path d="M1.5 1.5 L15.5 15.5 M15.5 1.5 L1.5 15.5" stroke="#e8e8e8" stroke-width="2" fill="none"/></svg>
<svg class="r" style="left:1854px;top:521px;" width="26" height="25" viewBox="0 0 26 25"><path d="M12 1.5 H4 Q1.5 1.5 1.5 4 V19 Q1.5 21.5 4 21.5 H10 M12 1.5 V21.5 M12 1.5 H19.5 Q22 1.5 22 4 V11" stroke="#cccccc" stroke-width="1.6" fill="none"/><circle cx="19" cy="16" r="3.2" stroke="#cccccc" stroke-width="1.5" fill="none"/><path d="M16.8 18.5 L13.5 22.5" stroke="#cccccc" stroke-width="1.6"/></svg>
<svg class="r" style="left:1897px;top:521px;" width="24" height="23" viewBox="0 0 24 23"><rect x="1.3" y="1.3" width="21" height="20" rx="2.2" stroke="#cccccc" stroke-width="1.6" fill="none"/><path d="M11.8 1.3 V21.3" stroke="#cccccc" stroke-width="1.6"/></svg>
<div class="r" style="left:1940.2px;top:531.2px;width:3.6px;height:3.6px;border-radius:50%;background:#cccccc"></div>
<div class="r" style="left:1947.2px;top:531.2px;width:3.6px;height:3.6px;border-radius:50%;background:#cccccc"></div>
<div class="r" style="left:1954.2px;top:531.2px;width:3.6px;height:3.6px;border-radius:50%;background:#cccccc"></div>
<div class="t" style="left:420.5px;top:569.4px;font-family:'Liberation Sans', sans-serif;font-size:20.5px;color:#a9a9a9;font-weight:400;">C:</div>
<svg class="r" style="left:446.5px;top:570px;" width="10" height="17" viewBox="0 0 10 17"><path d="M1.5 1 L8.5 8 L1.5 15" stroke="#a9a9a9" stroke-width="1.4" fill="none"/></svg>
<div class="t" style="left:463.9px;top:569.4px;font-family:'Liberation Sans', sans-serif;font-size:20.5px;color:#a9a9a9;font-weight:400;letter-spacing:-0.365px;">Projects</div>
<svg class="r" style="left:544.5px;top:570px;" width="10" height="17" viewBox="0 0 10 17"><path d="M1.5 1 L8.5 8 L1.5 15" stroke="#a9a9a9" stroke-width="1.4" fill="none"/></svg>
<div class="t" style="left:561.1px;top:569.4px;font-family:'Liberation Sans', sans-serif;font-size:20.5px;color:#a9a9a9;font-weight:400;letter-spacing:-0.043px;">discountsms</div>
<svg class="r" style="left:683.5px;top:570px;" width="10" height="17" viewBox="0 0 10 17"><path d="M1.5 1 L8.5 8 L1.5 15" stroke="#a9a9a9" stroke-width="1.4" fill="none"/></svg>
<div class="t" style="left:700.3px;top:569.4px;font-family:'Liberation Sans', sans-serif;font-size:20.5px;color:#a9a9a9;font-weight:400;letter-spacing:-0.267px;">docs</div>
<svg class="r" style="left:751px;top:570px;" width="10" height="17" viewBox="0 0 10 17"><path d="M1.5 1 L8.5 8 L1.5 15" stroke="#a9a9a9" stroke-width="1.4" fill="none"/></svg>
<svg class="r" style="left:770px;top:572px;" width="23" height="15" viewBox="0 0 23 15"><rect x="0.6" y="0.6" width="21.8" height="13.8" rx="1" stroke="#6e5a3a" stroke-width="1.1" fill="none"/><path d="M4 11 V4 L7.5 8 L11 4 V11" stroke="#8a7246" stroke-width="1.8" fill="none"/><path d="M16.5 4 V10 M13.8 7.8 L16.5 11 L19.2 7.8" stroke="#8a7246" stroke-width="1.7" fill="none"/></svg>
<div class="t" style="left:803.8px;top:569.4px;font-family:'Liberation Sans', sans-serif;font-size:20.5px;color:#a9a9a9;font-weight:400;letter-spacing:-0.985px;">README.md</div>
<svg class="r" style="left:926px;top:570px;" width="10" height="17" viewBox="0 0 10 17"><path d="M1.5 1 L8.5 8 L1.5 15" stroke="#a9a9a9" stroke-width="1.4" fill="none"/></svg>
<svg class="r" style="left:944px;top:568px;" width="24" height="19" viewBox="0 0 24 19"><rect x="1" y="1" width="22" height="17" rx="1.5" stroke="#d0d0d0" stroke-width="1.5" fill="none"/><text x="12" y="12" font-family="Liberation Sans" font-size="9" font-weight="700" fill="#d0d0d0" text-anchor="middle">abc</text></svg>
<div class="t" style="left:973.7px;top:569.4px;font-family:'Liberation Sans', sans-serif;font-size:20.5px;color:#a9a9a9;font-weight:400;letter-spacing:0.078px;"># Подтверждение дисконтной карты по SMS</div>
<div class="r" style="left:513px;top:596px;width:1470px;height:31px;background:transparent;border:1px solid #2c2c2e;box-sizing:border-box"></div>
<div class="t" style="left:456.03px;top:601.5px;font-family:'Liberation Mono', monospace;font-size:25px;color:#c6c6c6;font-weight:400;">1</div>
<div class="t" style="left:513.0px;top:601.5px;font-family:'Liberation Mono', monospace;font-size:25px;color:#569cd6;font-weight:400;letter-spacing:-0.030px;-webkit-text-stroke:0.75px #569cd6;"># Подтверждение дисконтной карты по SMS</div>
<div class="t" style="left:456.03px;top:633.5px;font-family:'Liberation Mono', monospace;font-size:25px;color:#6e7070;font-weight:400;">2</div>
<div class="t" style="left:456.03px;top:665.4px;font-family:'Liberation Mono', monospace;font-size:25px;color:#6e7070;font-weight:400;">3</div>
<div class="t" style="left:513.0px;top:665.4px;font-family:'Liberation Mono', monospace;font-size:25px;color:#569cd6;font-weight:400;letter-spacing:-0.030px;-webkit-text-stroke:0.75px #569cd6;">## Установка расширения &quot;Подтверждение дисконтной карты по SMS в 1С&quot;</div>
<div class="t" style="left:456.03px;top:697.4px;font-family:'Liberation Mono', monospace;font-size:25px;color:#6e7070;font-weight:400;">4</div>
<div class="t" style="left:456.03px;top:729.3px;font-family:'Liberation Mono', monospace;font-size:25px;color:#6e7070;font-weight:400;">5</div>
<div class="t" style="left:513.0px;top:729.3px;font-family:'Liberation Mono', monospace;font-size:25px;color:#d0d0d0;font-weight:400;letter-spacing:-0.030px;-webkit-text-stroke:0.35px #d0d0d0;">Для того чтобы можно было работать с расширением в конфигурации, нам нужно сделать несколько</div>
<div class="t" style="left:513.0px;top:761.2px;font-family:'Liberation Mono', monospace;font-size:25px;color:#d0d0d0;font-weight:400;letter-spacing:-0.030px;-webkit-text-stroke:0.35px #d0d0d0;">простых шагов. В примере будем использовать конфигурацию &quot;Управление торговлей 11.5&quot;:</div>
<div class="t" style="left:456.03px;top:793.2px;font-family:'Liberation Mono', monospace;font-size:25px;color:#6e7070;font-weight:400;">6</div>
<div class="t" style="left:456.03px;top:825.1px;font-family:'Liberation Mono', monospace;font-size:25px;color:#6e7070;font-weight:400;">7</div>
<div class="t" style="left:513.0px;top:825.1px;font-family:'Liberation Mono', monospace;font-size:25px;color:#6796e6;font-weight:400;letter-spacing:-0.030px;-webkit-text-stroke:0.35px #6796e6;">1.</div>
<div class="t" style="left:542.9px;top:825.1px;font-family:'Liberation Mono', monospace;font-size:25px;color:#d0d0d0;font-weight:400;letter-spacing:-0.030px;-webkit-text-stroke:0.35px #d0d0d0;"> Распакуйте архив с обработкой.</div>
<div class="t" style="left:456.03px;top:857.1px;font-family:'Liberation Mono', monospace;font-size:25px;color:#6e7070;font-weight:400;">8</div>
<div class="t" style="left:513.0px;top:857.1px;font-family:'Liberation Mono', monospace;font-size:25px;color:#6796e6;font-weight:400;letter-spacing:-0.030px;-webkit-text-stroke:0.35px #6796e6;">2.</div>
<div class="t" style="left:542.9px;top:857.1px;font-family:'Liberation Mono', monospace;font-size:25px;color:#d0d0d0;font-weight:400;letter-spacing:-0.030px;-webkit-text-stroke:0.35px #d0d0d0;"> Откройте НСИ и «Администрирование» &gt; «Печатные формы, отчеты и обработки» &gt; «</div>
<div class="t" style="left:1710.6px;top:857.1px;font-family:'Liberation Mono', monospace;font-size:25px;color:#569cd6;font-weight:400;letter-spacing:-0.030px;-webkit-text-stroke:0.75px #569cd6;">**Расширения**</div>
<div class="t" style="left:1920.2px;top:857.1px;font-family:'Liberation Mono', monospace;font-size:25px;color:#d0d0d0;font-weight:400;letter-spacing:-0.030px;-webkit-text-stroke:0.35px #d0d0d0;">».</div>
<div class="t" style="left:456.03px;top:889.0px;font-family:'Liberation Mono', monospace;font-size:25px;color:#6e7070;font-weight:400;">9</div>
<div class="t" style="left:441.06px;top:921.0px;font-family:'Liberation Mono', monospace;font-size:25px;color:#6e7070;font-weight:400;letter-spacing:-0.065px;">10</div>
<div class="t" style="left:513.0px;top:921.0px;font-family:'Liberation Mono', monospace;font-size:25px;color:#d0d0d0;font-weight:400;letter-spacing:-0.030px;-webkit-text-stroke:0.35px #d0d0d0;">![</div>
<div class="t" style="left:542.9px;top:921.0px;font-family:'Liberation Mono', monospace;font-size:25px;color:#ce9178;font-weight:400;letter-spacing:-0.030px;-webkit-text-stroke:0.35px #ce9178;">Расположение расширения</div>
<div class="t" style="left:887.2px;top:921.0px;font-family:'Liberation Mono', monospace;font-size:25px;color:#d0d0d0;font-weight:400;letter-spacing:-0.030px;-webkit-text-stroke:0.35px #d0d0d0;">](</div>
<div class="t" style="left:917.2px;top:921.0px;font-family:'Liberation Mono', monospace;font-size:25px;color:#d0d0d0;font-weight:400;letter-spacing:-0.030px;-webkit-text-stroke:0.35px #d0d0d0;text-decoration:underline;text-underline-offset:4.5px;text-decoration-thickness:1.6px;text-decoration-skip-ink:none">./img/pic.1.png</div>
<div class="t" style="left:1141.7px;top:921.0px;font-family:'Liberation Mono', monospace;font-size:25px;color:#d0d0d0;font-weight:400;letter-spacing:-0.030px;-webkit-text-stroke:0.35px #d0d0d0;">)</div>
<div class="t" style="left:441.06px;top:953.0px;font-family:'Liberation Mono', monospace;font-size:25px;color:#6e7070;font-weight:400;letter-spacing:-0.065px;">11</div>
<div class="t" style="left:441.06px;top:984.9px;font-family:'Liberation Mono', monospace;font-size:25px;color:#6e7070;font-weight:400;letter-spacing:-0.065px;">12</div>
<div class="t" style="left:513.0px;top:984.9px;font-family:'Liberation Mono', monospace;font-size:25px;color:#6796e6;font-weight:400;letter-spacing:-0.030px;-webkit-text-stroke:0.35px #6796e6;">3.</div>
<div class="t" style="left:542.9px;top:984.9px;font-family:'Liberation Mono', monospace;font-size:25px;color:#d0d0d0;font-weight:400;letter-spacing:-0.030px;-webkit-text-stroke:0.35px #d0d0d0;"> В открывшемся окне нажать на кнопку «Добавить из файла». Так как мы работаем с расширением,</div>
<svg class="r" style="left:513px;top:1002px;" width="46" height="7" viewBox="0 0 46 7"><path d="M0 3 Q1.5 0 3 3 Q4.5 6 6 3 Q7.5 0 9 3 Q10.5 6 12 3 Q13.5 0 15 3 Q16.5 6 18 3 Q19.5 0 21 3 Q22.5 6 24 3 Q25.5 0 27 3 Q28.5 6 30 3 Q31.5 0 33 3 Q34.5 6 36 3 Q37.5 0 39 3 Q40.5 6 42 3 Q43.5 0 45 3" stroke="#c9a800" stroke-width="1.4" fill="none"/></svg>
<div class="t" style="left:513.0px;top:1016.8px;font-family:'Liberation Mono', monospace;font-size:25px;color:#d0d0d0;font-weight:400;letter-spacing:-0.030px;-webkit-text-stroke:0.35px #d0d0d0;">система безопасности может запросить у нас подтверждение на дальнейшее подключение. После чего</div>
<div class="t" style="left:513.0px;top:1048.8px;font-family:'Liberation Mono', monospace;font-size:25px;color:#d0d0d0;font-weight:400;letter-spacing:-0.030px;-webkit-text-stroke:0.35px #d0d0d0;">добавим файл из распакованного ранее архива.</div>
<div class="t" style="left:441.06px;top:1080.8px;font-family:'Liberation Mono', monospace;font-size:25px;color:#6e7070;font-weight:400;letter-spacing:-0.065px;">13</div>
<div class="t" style="left:441.06px;top:1112.7px;font-family:'Liberation Mono', monospace;font-size:25px;color:#6e7070;font-weight:400;letter-spacing:-0.065px;">14</div>
<div class="t" style="left:513.0px;top:1112.7px;font-family:'Liberation Mono', monospace;font-size:25px;color:#d0d0d0;font-weight:400;letter-spacing:-0.030px;-webkit-text-stroke:0.35px #d0d0d0;">![</div>
<div class="t" style="left:542.9px;top:1112.7px;font-family:'Liberation Mono', monospace;font-size:25px;color:#ce9178;font-weight:400;letter-spacing:-0.030px;-webkit-text-stroke:0.35px #ce9178;">Предупреждение</div>
<div class="t" style="left:752.5px;top:1112.7px;font-family:'Liberation Mono', monospace;font-size:25px;color:#d0d0d0;font-weight:400;letter-spacing:-0.030px;-webkit-text-stroke:0.35px #d0d0d0;">](</div>
<div class="t" style="left:782.5px;top:1112.7px;font-family:'Liberation Mono', monospace;font-size:25px;color:#d0d0d0;font-weight:400;letter-spacing:-0.030px;-webkit-text-stroke:0.35px #d0d0d0;text-decoration:underline;text-underline-offset:4.5px;text-decoration-thickness:1.6px;text-decoration-skip-ink:none">./img/pic.2.png</div>
<div class="t" style="left:1007.0px;top:1112.7px;font-family:'Liberation Mono', monospace;font-size:25px;color:#d0d0d0;font-weight:400;letter-spacing:-0.030px;-webkit-text-stroke:0.35px #d0d0d0;">)</div>
<div class="t" style="left:441.06px;top:1144.7px;font-family:'Liberation Mono', monospace;font-size:25px;color:#6e7070;font-weight:400;letter-spacing:-0.065px;">15</div>
<div class="t" style="left:441.06px;top:1176.6px;font-family:'Liberation Mono', monospace;font-size:25px;color:#6e7070;font-weight:400;letter-spacing:-0.065px;">16</div>
<div class="t" style="left:513.0px;top:1176.6px;font-family:'Liberation Mono', monospace;font-size:25px;color:#6796e6;font-weight:400;letter-spacing:-0.030px;-webkit-text-stroke:0.35px #6796e6;">4.</div>
<div class="t" style="left:542.9px;top:1176.6px;font-family:'Liberation Mono', monospace;font-size:25px;color:#d0d0d0;font-weight:400;letter-spacing:-0.030px;-webkit-text-stroke:0.35px #d0d0d0;"> Отключите в окне диалог га</div>
<div class="t" style="left:947.1px;top:1176.6px;font-family:'Liberation Mono', monospace;font-size:25px;color:#d0d0d0;font-weight:400;letter-spacing:-0.030px;-webkit-text-stroke:0.35px #d0d0d0;">лочку &quot;безопасного&quot; режима и перезапустить программу. После</div>
<div class="t" style="left:513.0px;top:1208.5px;font-family:'Liberation Mono', monospace;font-size:25px;color:#d0d0d0;font-weight:400;letter-spacing:-0.030px;-webkit-text-stroke:0.35px #d0d0d0;">этого обработка автоматическ </div>
<div class="t" style="left:947.1px;top:1208.5px;font-family:'Liberation Mono', monospace;font-size:25px;color:#d0d0d0;font-weight:400;letter-spacing:-0.030px;-webkit-text-stroke:0.35px #d0d0d0;">а разместит кнопку вызова функционала подтверждения в назначенных</div>
<div class="t" style="left:513.0px;top:1240.5px;font-family:'Liberation Mono', monospace;font-size:25px;color:#d0d0d0;font-weight:400;letter-spacing:-0.030px;-webkit-text-stroke:0.35px #d0d0d0;">местах. РМК, заказ клиента, реализация - документы, где доступен стандартный вызов поиска карты</div>
<div class="r" style="left:1964px;top:596px;width:19.5px;height:2px;background:#5a5a5a;"></div>
<div class="r" style="left:1978.5px;top:645.5px;width:5px;height:7px;background:#d4a90f;"></div>
<div class="r" style="left:1978.5px;top:671.0px;width:5px;height:7px;background:#d4a90f;"></div>
<div class="r" style="left:1978.5px;top:748.0px;width:5px;height:7px;background:#d4a90f;"></div>
<div class="r" style="left:1978.5px;top:765.2px;width:5px;height:7px;background:#d4a90f;"></div>
<div class="r" style="left:1978.5px;top:795.3px;width:5px;height:7px;background:#d4a90f;"></div>
<div class="r" style="left:1978.5px;top:885.5px;width:5px;height:7px;background:#d4a90f;"></div>
<div class="r" style="left:1978.5px;top:919.1px;width:5px;height:7px;background:#d4a90f;"></div>
<div class="r" style="left:1978.5px;top:962.0px;width:5px;height:7px;background:#d4a90f;"></div>
<div class="r" style="left:1978.5px;top:1008.9px;width:5px;height:7px;background:#d4a90f;"></div>
<div class="r" style="left:1978.5px;top:683.9px;width:5px;height:7px;background:#3a8ee6;"></div>
<div class="r" style="left:409px;top:1121px;width:541px;height:127px;background:#3a393c;border-radius:7px;box-shadow:0 0 10px rgba(0,0,0,0.55);"></div>
<svg class="r" style="left:428px;top:1139px;" width="19" height="19" viewBox="0 0 19 19"><circle cx="9.5" cy="9.5" r="8" stroke="#3794ff" stroke-width="1.6" fill="none"/><path d="M6.8 7.3 Q6.8 4.6 9.5 4.6 Q12.2 4.6 12.2 7 Q12.2 8.6 10.4 9.4 Q9.5 9.9 9.5 11.2" stroke="#3794ff" stroke-width="1.5" fill="none"/><circle cx="9.5" cy="13.8" r="1" fill="#3794ff"/></svg>
<div class="t" style="left:457.9px;top:1139.0px;font-family:'Liberation Sans', sans-serif;font-size:20.2px;color:#cccccc;font-weight:400;letter-spacing:-0.494px;">Добро пожаловать в новую версию vscode-</div>
<div class="t" style="left:457.9px;top:1163.7px;font-family:'Liberation Sans', sans-serif;font-size:20.2px;color:#cccccc;font-weight:400;letter-spacing:-0.991px;">icons. v12.14.0</div>
<svg class="r" style="left:878.5px;top:1139.5px;" width="18" height="18" viewBox="0 0 18 18"><polygon points="17.00,7.21 17.00,10.79 14.52,11.08 14.37,11.43 15.92,13.39 13.39,15.92 11.43,14.37 11.08,14.52 10.79,17.00 7.21,17.00 6.92,14.52 6.57,14.37 4.61,15.92 2.08,13.39 3.63,11.43 3.48,11.08 1.00,10.79 1.00,7.21 3.48,6.92 3.63,6.57 2.08,4.61 4.61,2.08 6.57,3.63 6.92,3.48 7.21,1.00 10.79,1.00 11.08,3.48 11.43,3.63 13.39,2.08 15.92,4.61 14.37,6.57 14.52,6.92" stroke="#c5c5c5" stroke-width="1.3" fill="none" stroke-linejoin="round"/><circle cx="9" cy="9" r="2.4" stroke="#c5c5c5" stroke-width="1.3" fill="none"/></svg>
<svg class="r" style="left:916px;top:1142px;" width="13" height="13" viewBox="0 0 13 13"><path d="M1 1 L12 12 M12 1 L1 12" stroke="#c5c5c5" stroke-width="1.5" fill="none"/></svg>
<div class="t" style="left:430.2px;top:1209.0px;font-family:'Liberation Sans', sans-serif;font-size:18.5px;color:#9a9a9a;font-weight:400;letter-spacing:-0.605px;">Источник:...</div>
<div class="t" style="left:537.5px;top:1209.7px;font-family:'Liberation Sans', sans-serif;font-size:18px;color:#e8e8e8;font-weight:400;">Н</div>
<div class="r" style="left:553.2px;top:1201.7px;width:383.4px;height:32px;background:#0e639c;border-radius:2px"></div>
<div class="t" style="left:562.8px;top:1208.4px;font-family:'Liberation Sans', sans-serif;font-size:20.2px;color:#ffffff;font-weight:400;letter-spacing:-0.712px;">Информация о последних изменениях (на</div>
<div class="r" style="left:396px;top:1262px;width:1587.5px;height:33px;background:#6e2187;border-radius:0 0 9px 9px"></div>
<div class="r" style="left:396px;top:1262px;width:53px;height:33px;background:#16825d;border-radius:0 0 0 9px"></div>
<svg class="r" style="left:410px;top:1266px;" width="24" height="26" viewBox="0 0 24 26"><path d="M5.3 9.8 L11.3 15.7 L5.6 21.7" stroke="#e8fff4" stroke-width="1.9" fill="none" stroke-linecap="round"/><path d="M18.6 4 L12.6 10 L18.6 16" stroke="#e8fff4" stroke-width="1.9" fill="none" stroke-linecap="round"/></svg>
<svg class="r" style="left:461.5px;top:1272px;" width="24" height="14" viewBox="0 0 24 14"><path d="M12 7 Q8 1.5 5.5 1.5 Q1.5 1.5 1.5 7 Q1.5 12.5 5.5 12.5 Q8 12.5 12 7 Q16 1.5 18.5 1.5 Q22.5 1.5 22.5 7 Q22.5 12.5 18.5 12.5 Q16 12.5 12 7 Z" stroke="#ffffff" stroke-width="2.2" fill="none"/></svg>
<div class="t" style="left:489.4px;top:1271.4px;font-family:'Liberation Sans', sans-serif;font-size:18.3px;color:#ffffff;font-weight:400;letter-spacing:0.405px;">Agents</div>
<svg class="r" style="left:574px;top:1269px;" width="22" height="22" viewBox="0 0 22 22"><circle cx="11" cy="11" r="9.3" stroke="#ffffff" stroke-width="1.6" fill="none"/><path d="M7 7 L15 15 M15 7 L7 15" stroke="#ffffff" stroke-width="1.6"/></svg>
<div class="t" style="left:600.5px;top:1271.4px;font-family:'Liberation Sans', sans-serif;font-size:18.3px;color:#ffffff;font-weight:400;">0</div>
<svg class="r" style="left:617px;top:1269px;" width="23" height="21" viewBox="0 0 23 21"><path d="M11.5 1.5 L21.5 19.5 H1.5 Z" stroke="#ffffff" stroke-width="1.6" fill="none" stroke-linejoin="round"/><path d="M11.5 7.5 V13.5" stroke="#ffffff" stroke-width="1.8"/><circle cx="11.5" cy="16.3" r="1.1" fill="#ffffff"/></svg>
<div class="t" style="left:643.5px;top:1271.4px;font-family:'Liberation Sans', sans-serif;font-size:18.3px;color:#ffffff;font-weight:400;">9</div>
<svg class="r" style="left:660px;top:1269px;" width="22" height="22" viewBox="0 0 22 22"><circle cx="11" cy="11" r="9.3" stroke="#ffffff" stroke-width="1.6" fill="none"/><path d="M11 9.5 V16" stroke="#ffffff" stroke-width="2"/><circle cx="11" cy="6.5" r="1.2" fill="#ffffff"/></svg>
<div class="t" style="left:686.5px;top:1271.4px;font-family:'Liberation Sans', sans-serif;font-size:18.3px;color:#ffffff;font-weight:400;">1</div>
<div class="t" style="left:1094.2px;top:1271.4px;font-family:'Liberation Sans', sans-serif;font-size:18.3px;color:#b58fc4;font-weight:400;letter-spacing:-0.336px;text-decoration:line-through">Cursor Tab</div>
<div class="t" style="left:1209px;top:1271.4px;font-family:'Liberation Sans', sans-serif;font-size:18.3px;color:#ffffff;font-weight:400;letter-spacing:0.091px;">Строка 1, столбец 1</div>
<div class="t" style="left:1407px;top:1271.4px;font-family:'Liberation Sans', sans-serif;font-size:18.3px;color:#ffffff;font-weight:400;letter-spacing:0.241px;">Пробелов: 4</div>
<div class="t" style="left:1540.6px;top:1271.4px;font-family:'Liberation Sans', sans-serif;font-size:18.3px;color:#ffffff;font-weight:400;letter-spacing:-0.336px;">UTF-8</div>
<div class="t" style="left:1616.4px;top:1271.4px;font-family:'Liberation Sans', sans-serif;font-size:18.3px;color:#ffffff;font-weight:400;letter-spacing:-2.096px;">CRLF</div>
<div class="t" style="left:1684px;top:1272.1px;font-family:'Liberation Sans', sans-serif;font-size:17.5px;color:#ffffff;font-weight:400;letter-spacing:6.311px;letter-spacing:4px">{}</div>
<div class="t" style="left:1712.7px;top:1271.4px;font-family:'Liberation Sans', sans-serif;font-size:18.3px;color:#ffffff;font-weight:400;letter-spacing:0.727px;">Markdown</div>
<svg class="r" style="left:1824px;top:1272px;" width="23" height="16" viewBox="0 0 23 16"><path d="M1 8 L5.5 13 L13.5 2 M9 11.5 L10.5 13 L21.5 1" stroke="#ffffff" stroke-width="1.6" fill="none"/></svg>
<div class="t" style="left:1853.4px;top:1271.4px;font-family:'Liberation Sans', sans-serif;font-size:18.3px;color:#ffffff;font-weight:400;letter-spacing:0.217px;">Prettier</div>
<svg class="r" style="left:1940px;top:1268px;" width="24" height="22" viewBox="0 0 24 22"><path d="M4 16 Q5 14 5 12 V9.5 Q5 4 10.5 4 Q13 4 14.5 5.5 M17 10 V12 Q17 14 18 16 Z M3 16.5 H19" stroke="#ffffff" stroke-width="1.6" fill="none"/><path d="M8.5 18.5 Q11 21 13.5 18.5" stroke="#ffffff" stroke-width="1.6" fill="none"/><circle cx="18" cy="5" r="3.8" fill="#ffffff"/></svg>
<svg class="r" style="left:0px;top:0px;pointer-events:none" width="2048" height="1310" viewBox="0 0 2048 1310"><path d="M528.8 413.8 C537.1 407.6 563.0 386.5 578.6 376.4 C594.2 366.3 607.9 360.1 622.5 353 C637.1 345.9 651.9 339.7 666.5 334 C681.1 328.3 695.8 322.8 710.4 318.6 C725.0 314.4 741.0 311.3 754.4 309 C767.8 306.7 780.1 305.6 791 305 C801.9 304.4 810.9 304.9 820 305.4 C829.1 305.9 833.6 306.0 845.4 308.2 C857.2 310.4 875.7 314.6 890.8 318.8 C905.9 323.0 921.1 327.3 936.2 333.6 C951.4 339.9 966.6 347.3 981.7 356.5 C996.8 365.7 1011.9 377.5 1027 389 C1042.1 400.5 1062.0 416.3 1072.5 425.5 C1083.0 434.7 1087.1 440.9 1090 444" stroke="#db3a30" stroke-width="2.6" fill="none" stroke-linecap="round"/><path d="M1101 461.5 L1080 453.5 L1089 449 L1094 440.5 Z" fill="#db3a30" stroke="#db3a30" stroke-width="1.2" stroke-linejoin="round"/></svg>
</body></html>
